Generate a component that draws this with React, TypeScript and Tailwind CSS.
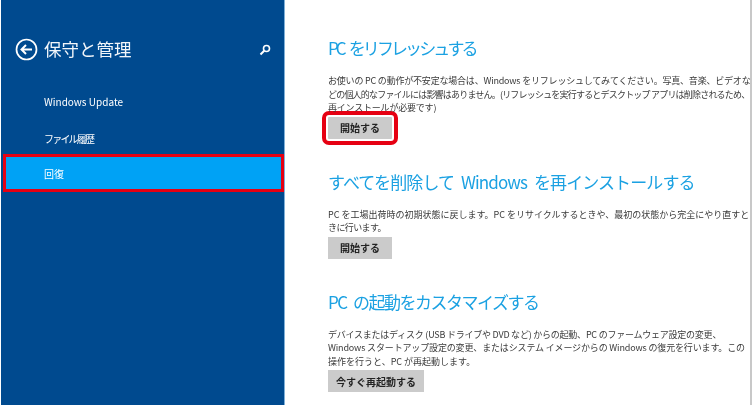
import React from 'react';

const FONT = "font-['Noto_Sans_CJK_JP','Noto_Sans_CJK_SC',sans-serif]";

interface Line {
  text: string;
  className?: string;
}

interface SectionProps {
  title: string;
  titleClass: string;
  lines: Line[];
  action: string;
  actionWidth: string;
  highlighted?: boolean;
  className: string;
}

const Section: React.FC<SectionProps> = ({ title, titleClass, lines, action, actionWidth, highlighted, className }) => (
  <section className={className}>
    <h2 className={`text-[17px] leading-[24px] text-[#1ba1e2] whitespace-nowrap [word-spacing:4px] blur-[0.3px] ${titleClass}`}>{title}</h2>
    <div className="mt-[14px] text-[9px] leading-[13.5px] text-[#3a3a3a] whitespace-nowrap blur-[0.3px]">
      {lines.map((line) => (
        <p key={line.text} className={line.className}>{line.text}</p>
      ))}
    </div>
    <button
      type="button"
      className={`mt-[2px] block h-[22px] ${actionWidth} bg-[#cbcbcb] text-[10px] font-bold text-[#222] ${
        highlighted ? 'rounded-[1px] outline-[4px] outline-offset-[2px] outline-[#e60012]' : ''
      }`}
    >
      <span className="blur-[0.3px]">{action}</span>
    </button>
  </section>
);

const App: React.FC = () => {
  return (
    <div className={`${FONT} flex h-[405px] w-[753px] overflow-hidden bg-white`}>
      {/* Left settings pane */}
      <aside className="ml-px flex w-[284px] shrink-0 flex-col bg-[#004a8f] border-r border-[#7fb0d8]">
        <div className="mt-[36px] flex h-[26px] items-center pl-[14px] pr-[12px] text-white">
          <svg width="23" height="23" viewBox="0 0 23 23" fill="none" stroke="#fff" className="shrink-0">
            <circle cx="11.5" cy="11.5" r="10" strokeWidth="1.7" />
            <path d="M17 11.5H7M11 7l-4.5 4.5L11 16" strokeWidth="2" />
          </svg>
          <h1 className="ml-[6px] text-[17.5px] leading-[26px] text-[#f2f6fa] blur-[0.3px]">保守と管理</h1>
          <svg width="12" height="12" viewBox="0 0 12 12" fill="none" stroke="#fff" className="ml-auto mr-[1px] mt-[1px]">
            <circle cx="7.5" cy="4.5" r="3" strokeWidth="1.6" />
            <path d="M5.2 6.8L1.5 10.5" strokeWidth="2" />
          </svg>
        </div>
        <nav className="mt-[26px] flex flex-col text-[10px] text-white">
          <div className="flex h-[26px] items-center pl-[43px] blur-[0.3px]">Windows Update</div>
          <div className="mt-[11px] flex h-[26px] items-center pl-[43px] tracking-[-1.8px] blur-[0.3px]">ファイル履歴</div>
          <div className="mt-[3px] ml-[2px] flex h-[38px] items-center border-[3px] border-[#e60012] bg-[#00a2f5] pl-[38px]">
            <span className="blur-[0.3px]">回復</span>
          </div>
        </nav>
      </aside>

      {/* Recovery options */}
      <main className="flex-1 pl-[43px] border-r-2 border-[#c8c8c8] mr-px">
        <Section
          className="mt-[36px]"
          title="PC をリフレッシュする"
          titleClass="tracking-[-2.9px]"
          lines={[
            { text: 'お使いの PC の動作が不安定な場合は、Windows をリフレッシュしてみてください。写真、音楽、ビデオな', className: 'tracking-[-0.2px]' },
            { text: 'どの個人的なファイルには影響はありません。(リフレッシュを実行するとデスクトップ アプリは削除されるため、', className: 'tracking-[-0.8px]' },
            { text: '再インストールが必要です)', className: 'tracking-[-0.2px]' },
          ]}
          action="開始する"
          actionWidth="w-[64px]"
          highlighted
        />
        <Section
          className="mt-[31px]"
          title="すべてを削除して Windows を再インストールする"
          titleClass="tracking-[-0.9px]"
          lines={[
            { text: 'PC を工場出荷時の初期状態に戻します。PC をリサイクルするときや、最初の状態から完全にやり直すと' },
            { text: 'きに行います。', className: 'tracking-[-0.6px]' },
          ]}
          action="開始する"
          actionWidth="w-[64px]"
        />
        <Section
          className="mt-[31px]"
          title="PC の起動をカスタマイズする"
          titleClass="tracking-[-1.5px]"
          lines={[
            { text: 'デバイスまたはディスク (USB ドライブや DVD など) からの起動、PC のファームウェア設定の変更、', className: 'tracking-[-0.23px]' },
            { text: 'Windows スタートアップ設定の変更、またはシステム イメージからの Windows の復元を行います。この', className: 'tracking-[-0.15px]' },
            { text: '操作を行うと、PC が再起動します。' },
          ]}
          action="今すぐ再起動する"
          actionWidth="w-[96px]"
        />
      </main>
    </div>
  );
};

export default App;
